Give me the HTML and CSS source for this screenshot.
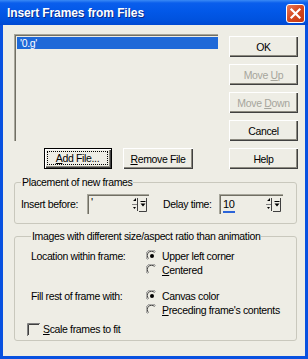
FILE: index.html
```html
<!DOCTYPE html>
<html>
<head>
    <title>Insert Frames from Files</title>
    <link rel="stylesheet" href="styles.css">
</head>
<body>
    <div class="window">
        <div class="titlebar">
            <span class="title">Insert Frames from Files</span>
            <span class="close">
                <svg width="19" height="19" viewBox="0 0 19 19">
                    <path d="M5.5 5.5 L13.5 13.5 M13.5 5.5 L5.5 13.5" stroke="#fff" stroke-width="2.2" stroke-linecap="square"/>
                </svg>
            </span>
        </div>

        <div class="client">
            <div class="top">
                <div class="filelist">
                    <div class="item selected">'0.g'</div>
                </div>
                <div class="side-buttons">
                    <button class="btn">OK</button>
                    <button class="btn" disabled>Move <u>U</u>p</button>
                    <button class="btn" disabled>Move <u>D</u>own</button>
                    <button class="btn">Cancel</button>
                </div>
                <div class="file-buttons">
                    <button class="btn default add"><span class="focus"><u>A</u>dd File...</span></button>
                    <button class="btn remove"><u>R</u>emove File</button>
                </div>
                <button class="btn">Help</button>
            </div>

            <fieldset class="group placement">
                <legend>Placement of new frames</legend>
                <div class="field-row">
                    <label class="lbl-insert">Insert before:</label>
                    <div class="spin spin-insert">
                        <span class="value">'</span>
                        <svg class="spin-ctl" width="16" height="16" viewBox="0 0 16 16">
                            <path d="M2 4 L5 1 L5 4 Z M2.5 4 H5" fill="#000"/>
                            <path d="M1 7.5 H6" stroke="#808080"/>
                            <path d="M6.5 1 V14" stroke="#404040"/>
                            <path d="M2 10 H5 L3.5 12 Z" fill="#000"/>
                            <path d="M9.5 4.5 H14.5" stroke="#000"/>
                            <path d="M9.5 6.5 H14.5 L12 9.5 Z" fill="#000"/>
                            <path d="M15.5 1 V14.5 H8" stroke="#404040" fill="none"/>
                        </svg>
                    </div>
                    <label class="lbl-delay">Delay time:</label>
                    <div class="spin spin-delay">
                        <span class="value current">10</span>
                        <svg class="spin-ctl" width="16" height="16" viewBox="0 0 16 16">
                            <path d="M2 4 L5 1 L5 4 Z M2.5 4 H5" fill="#000"/>
                            <path d="M1 7.5 H6" stroke="#808080"/>
                            <path d="M6.5 1 V14" stroke="#404040"/>
                            <path d="M2 10 H5 L3.5 12 Z" fill="#000"/>
                            <path d="M9.5 4.5 H14.5" stroke="#000"/>
                            <path d="M9.5 6.5 H14.5 L12 9.5 Z" fill="#000"/>
                            <path d="M15.5 1 V14.5 H8" stroke="#404040" fill="none"/>
                        </svg>
                    </div>
                </div>
            </fieldset>

            <fieldset class="group images">
                <legend>Images with different size/aspect ratio than animation</legend>
                <div class="option-grid">
                    <span class="opt-label">Location within frame:</span>
                    <label class="radio-line">
                        <svg class="radio" width="12" height="12" viewBox="0 0 12 12">
                            <path d="M1.5 9.5 A5 5 0 0 1 9.5 1.5" fill="none" stroke="#808080"/>
                            <path d="M2.5 8.5 A4 4 0 0 1 8.5 2.5" fill="none" stroke="#404040"/>
                            <circle cx="6" cy="6" r="2" fill="#000"/>
                        </svg>
                        Upper left corner
                    </label>
                    <span></span>
                    <label class="radio-line">
                        <svg class="radio" width="12" height="12" viewBox="0 0 12 12">
                            <path d="M1.5 9.5 A5 5 0 0 1 9.5 1.5" fill="none" stroke="#808080"/>
                            <path d="M2.5 8.5 A4 4 0 0 1 8.5 2.5" fill="none" stroke="#404040"/>
                        </svg>
                        <span><u>C</u>entered</span>
                    </label>
                </div>
                <div class="option-grid second">
                    <span class="opt-label">Fill rest of frame with:</span>
                    <label class="radio-line">
                        <svg class="radio" width="12" height="12" viewBox="0 0 12 12">
                            <path d="M1.5 9.5 A5 5 0 0 1 9.5 1.5" fill="none" stroke="#808080"/>
                            <path d="M2.5 8.5 A4 4 0 0 1 8.5 2.5" fill="none" stroke="#404040"/>
                            <circle cx="6" cy="6" r="2" fill="#000"/>
                        </svg>
                        Canvas color
                    </label>
                    <span></span>
                    <label class="radio-line">
                        <svg class="radio" width="12" height="12" viewBox="0 0 12 12">
                            <path d="M1.5 9.5 A5 5 0 0 1 9.5 1.5" fill="none" stroke="#808080"/>
                            <path d="M2.5 8.5 A4 4 0 0 1 8.5 2.5" fill="none" stroke="#404040"/>
                        </svg>
                        <span><u>P</u>receding frame's contents</span>
                    </label>
                </div>
                <label class="check-line">
                    <svg class="check" width="13" height="13" viewBox="0 0 13 13">
                        <path d="M0.5 13 V0.5 H13" fill="none" stroke="#808080"/>
                        <path d="M1.5 12 V1.5 H12" fill="none" stroke="#404040"/>
                    </svg>
                    <span><u>S</u>cale frames to fit</span>
                </label>
            </fieldset>
        </div>
    </div>
</body>
</html>
```

FILE: styles.css
```css
* {
    box-sizing: border-box;
}

body {
    margin: 0;
    font-family: "Liberation Sans", Arial, sans-serif;
    font-size: 10.5px;
    letter-spacing: -0.35px;
    color: #000;
    background: #fff;
}

.window {
    width: 308px;
    height: 359px;
    display: flex;
    flex-direction: column;
    background: #0851e0;
}

.titlebar {
    height: 25px;
    display: flex;
    align-items: center;
    justify-content: space-between;
    padding: 0 3px 0 7px;
    background: linear-gradient(#3a8af5 0, #0a5eec 3px, #0258e8 45%, #0052de 80%, #0049d2 100%);
}

.title {
    color: #fff;
    font-weight: bold;
    font-size: 12px;
    letter-spacing: -0.1px;
    text-shadow: 1px 1px 0 #0a2a8a;
}

.close {
    width: 19px;
    height: 19px;
    margin-top: 2px;
    border: 1px solid #fff;
    border-radius: 3px;
    background: linear-gradient(135deg, #e87a5c, #d5471e 50%, #c43a14);
    display: flex;
    align-items: center;
    justify-content: center;
}

.close svg {
    display: block;
    margin: -1px;
}

.client {
    flex: 1;
    margin: 0 3px 3px;
    background: #eeede5;
    padding: 9px 8px 0 11px;
}

/* list + buttons */

.top {
    display: grid;
    grid-template-columns: 204px 69px;
    grid-template-rows: 107px 21px;
    column-gap: 11px;
    row-gap: 7px;
    margin-right: -1px;
}

.filelist {
    border-top: 1px solid #a7a69b;
    border-left: 1px solid #a7a69b;
    box-shadow: inset 1px 1px 0 #716f64;
    padding: 2px 0 0 2px;
}

.item {
    height: 12px;
    line-height: 12px;
    padding-left: 3px;
}

.item.selected {
    background: #1f69d8;
    color: #fff;
}

.side-buttons {
    display: flex;
    flex-direction: column;
    gap: 7px;
    margin-top: 2px;
}

.btn {
    font: inherit;
    letter-spacing: inherit;
    height: 21px;
    width: 69px;
    padding: 0;
    border: none;
    background: #eeede5;
    color: #000;
    box-shadow: inset 1px 1px 0 #fff, inset -1px -1px 0 #404040, inset -2px -2px 0 #8c8a80;
}

.btn:disabled {
    color: #a6a59c;
}

.file-buttons {
    display: flex;
    gap: 11px;
    padding-left: 30px;
}

.btn.add {
    width: 68px;
}

.btn.remove {
    width: 70px;
}

.btn.default {
    border: 1px solid #000;
    padding: 2px 3px 3px 2px;
}

.focus {
    display: block;
    height: 100%;
    line-height: 13px;
    border: 1px dotted #000;
}

/* group boxes */

.group {
    margin: 7px 0 0;
    padding: 5px 6px 9px;
    border: 1px solid #c9c8bd;
    border-radius: 3px;
}

.group legend {
    padding: 0 1px;
    line-height: 13px;
}

.field-row {
    display: flex;
    align-items: center;
    height: 20px;
}

.lbl-insert {
    width: 66px;
}

.lbl-delay {
    width: 56px;
    margin-left: 14px;
}

.spin {
    height: 20px;
    display: flex;
    align-items: center;
    border-top: 1px solid #a7a69b;
    border-left: 1px solid #a7a69b;
    box-shadow: inset 1px 1px 0 #716f64;
    padding: 0 2px 0 3px;
}

.spin-insert {
    width: 62px;
}

.spin-delay {
    width: 64px;
}

.spin .value {
    flex: 1;
    font-size: 11px;
}

.spin-insert .value {
    align-self: flex-start;
    margin-top: 1px;
}

.value.current {
    flex: none;
    border-bottom: 2px solid #2c64d8;
    line-height: 14px;
    margin-right: auto;
}

.spin-ctl {
    display: block;
}

.group.images {
    margin-top: 6px;
    padding: 6px 6px 4px 16px;
}

.option-grid {
    display: grid;
    grid-template-columns: 115px 1fr;
    grid-auto-rows: 14px;
    align-items: center;
}

.option-grid.second {
    margin-top: 12px;
}

.radio-line {
    display: flex;
    align-items: center;
    gap: 4px;
}

.radio,
.check {
    display: block;
    flex: none;
}

.check-line {
    display: flex;
    align-items: center;
    gap: 3px;
    height: 14px;
    margin: 5px 0 0 -4px;
}
```
